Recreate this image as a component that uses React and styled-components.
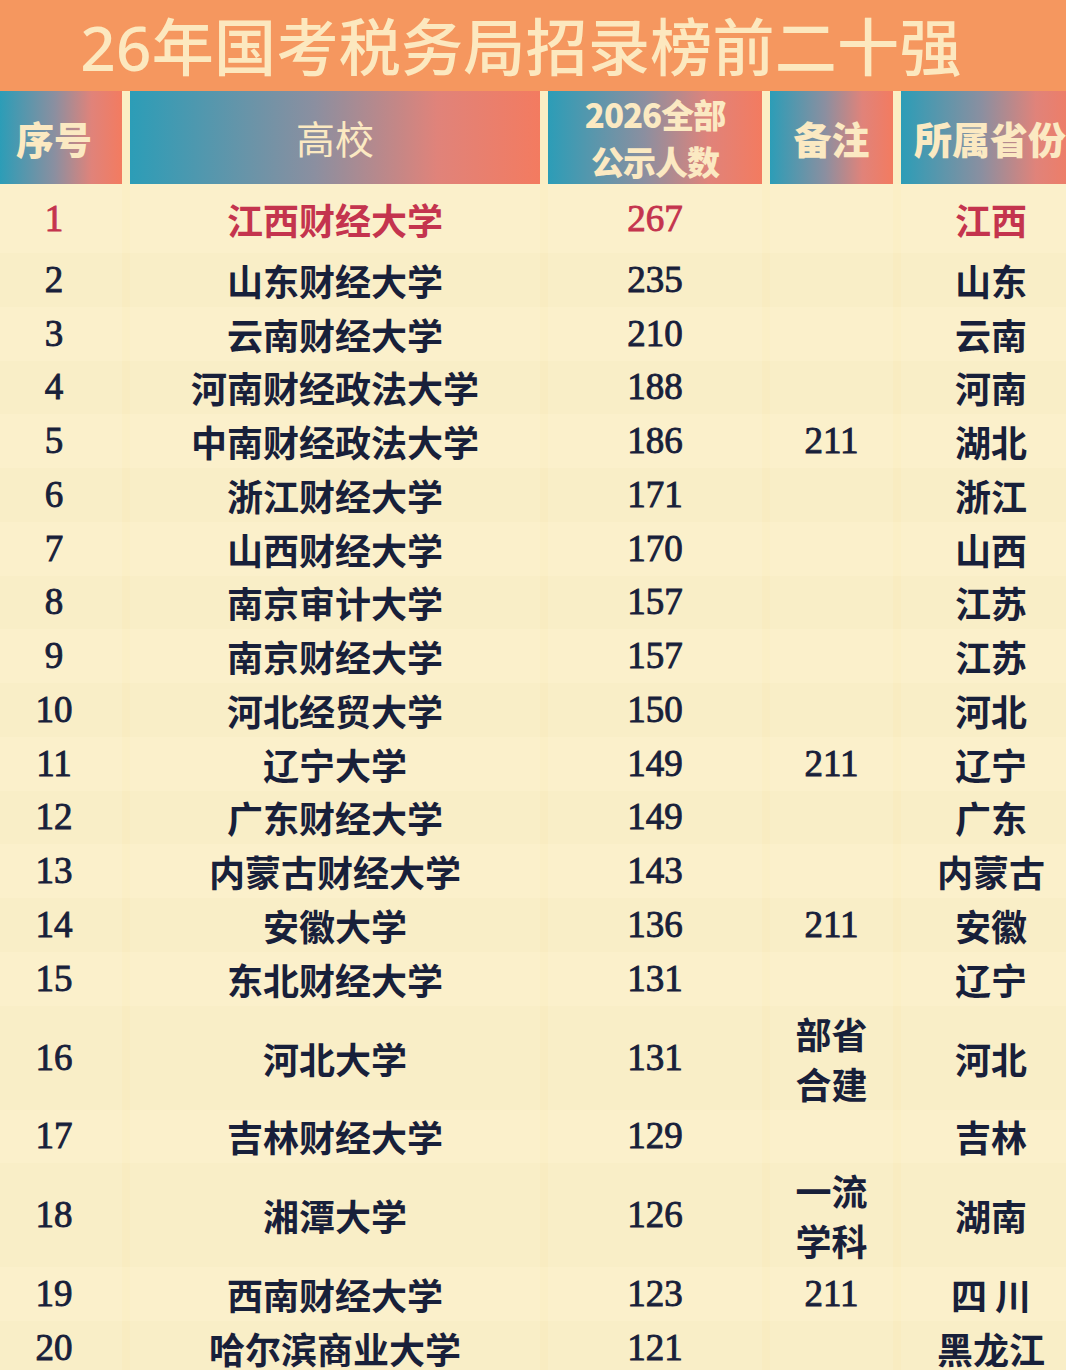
import React from "react";
import styled, { createGlobalStyle } from "styled-components";

const GlobalStyle = createGlobalStyle`
  html, body {
    margin: 0;
    padding: 0;
    background: #fbeec4;
    overflow: hidden;
  }
  body {
    width: 1066px;
    height: 1370px;
  }
`;

const cols = "122px 410px 214px 123px 180px";

const Page = styled.div`
  width: 1066px;
  height: 1370px;
  overflow: hidden;
  background: #fbeec4;
  font-family: "Liberation Serif", "Noto Sans CJK SC", serif;
`;

const TitleBar = styled.div`
  height: 91px;
  background: #f5975f;
  display: flex;
  align-items: center;
  justify-content: center;
  padding-right: 24px;
  box-sizing: border-box;
`;

const Title = styled.h1`
  margin: 0;
  font-family: "Noto Sans", "Noto Sans CJK SC", sans-serif;
  font-weight: 500;
  font-size: 62px;
  line-height: 1;
  color: #fce8bf;
  letter-spacing: 0.3px;
  padding-top: 2px;
`;

const HeadRow = styled.div`
  display: grid;
  grid-template-columns: ${cols};
  column-gap: 8px;
  height: 93px;
  background: #fbeec4;
`;

const HeadCell = styled.div`
  background: linear-gradient(90deg, #2c9db7 0%, #8b8fa0 45%, #e0837a 75%, #f37b60 100%);
  display: flex;
  align-items: center;
  justify-content: ${(p) => p.$align || "center"};
  padding-left: ${(p) => p.$pad || 0}px;
  padding-right: ${(p) => p.$padR || 0}px;
  color: #fbe9c2;
  font-family: "Noto Sans CJK SC", sans-serif;
  font-weight: ${(p) => (p.$light ? 400 : 900)};
  font-size: ${(p) => p.$size || 37}px;
  line-height: ${(p) => p.$lh || 1.2};
  letter-spacing: ${(p) => (p.$tight ? "-1px" : "0")};
  text-align: center;
  white-space: nowrap;
  overflow: hidden;
`;

const Body = styled.div`
  display: flex;
  flex-direction: column;
`;

const Row = styled.div`
  display: grid;
  grid-template-columns: ${cols};
  column-gap: 8px;
  height: ${(p) => p.$h}px;
  background: ${(p) => (p.$alt ? "#f9ecc1" : "#fbefc6")};
  color: ${(p) => (p.$top ? "#c4344e" : "#18203a")};
`;

const Cell = styled.div`
  display: flex;
  align-items: center;
  justify-content: center;
  text-align: center;
  background: rgba(255, 255, 255, 0.1);
  font-family: ${(p) =>
    p.$num ? '"Liberation Serif", serif' : '"Noto Sans CJK SC", sans-serif'};
  font-size: ${(p) => (p.$num ? 37 : 36)}px;
  font-weight: ${(p) => (p.$num ? 400 : 700)};
  -webkit-text-stroke: ${(p) => (p.$num ? "0.9px" : "0")};
  line-height: 50px;
  white-space: pre-line;
  padding-right: ${(p) => p.$padR || 0}px;
`;

const rows = [
  [1, "江西财经大学", 267, "", "江西"],
  [2, "山东财经大学", 235, "", "山东"],
  [3, "云南财经大学", 210, "", "云南"],
  [4, "河南财经政法大学", 188, "", "河南"],
  [5, "中南财经政法大学", 186, "211", "湖北"],
  [6, "浙江财经大学", 171, "", "浙江"],
  [7, "山西财经大学", 170, "", "山西"],
  [8, "南京审计大学", 157, "", "江苏"],
  [9, "南京财经大学", 157, "", "江苏"],
  [10, "河北经贸大学", 150, "", "河北"],
  [11, "辽宁大学", 149, "211", "辽宁"],
  [12, "广东财经大学", 149, "", "广东"],
  [13, "内蒙古财经大学", 143, "", "内蒙古"],
  [14, "安徽大学", 136, "211", "安徽"],
  [15, "东北财经大学", 131, "", "辽宁"],
  [16, "河北大学", 131, "部省\n合建", "河北"],
  [17, "吉林财经大学", 129, "", "吉林"],
  [18, "湘潭大学", 126, "一流\n学科", "湖南"],
  [19, "西南财经大学", 123, "211", "四 川"],
  [20, "哈尔滨商业大学", 121, "", "黑龙江"],
];

function rowHeight(i, note) {
  if (i === 0) return 69;
  if (note.includes("\n")) return 104;
  return 53.75;
}

export default function App() {
  return (
    <>
      <GlobalStyle />
      <Page>
        <TitleBar>
          <Title>26年国考税务局招录榜前二十强</Title>
        </TitleBar>
        <HeadRow>
          <HeadCell $size={38} $padR={14}>序号</HeadCell>
          <HeadCell $light $size={39}>高校</HeadCell>
          <HeadCell $size={33} $lh={1.42} $tight>
            2026全部
            <br />
            公示人数
          </HeadCell>
          <HeadCell $size={38}>备注</HeadCell>
          <HeadCell $size={38} $align="flex-start" $pad={13}>所属省份</HeadCell>
        </HeadRow>
        <Body>
          {rows.map(([rank, school, count, note, prov], i) => (
            <Row key={rank} $h={rowHeight(i, note)} $alt={i % 2 === 1} $top={i === 0}>
              <Cell $num $padR={14}>{rank}</Cell>
              <Cell>{school}</Cell>
              <Cell $num>{count}</Cell>
              <Cell $num={/^\d+$/.test(note)}>{note}</Cell>
              <Cell>{prov}</Cell>
            </Row>
          ))}
        </Body>
      </Page>
    </>
  );
}
